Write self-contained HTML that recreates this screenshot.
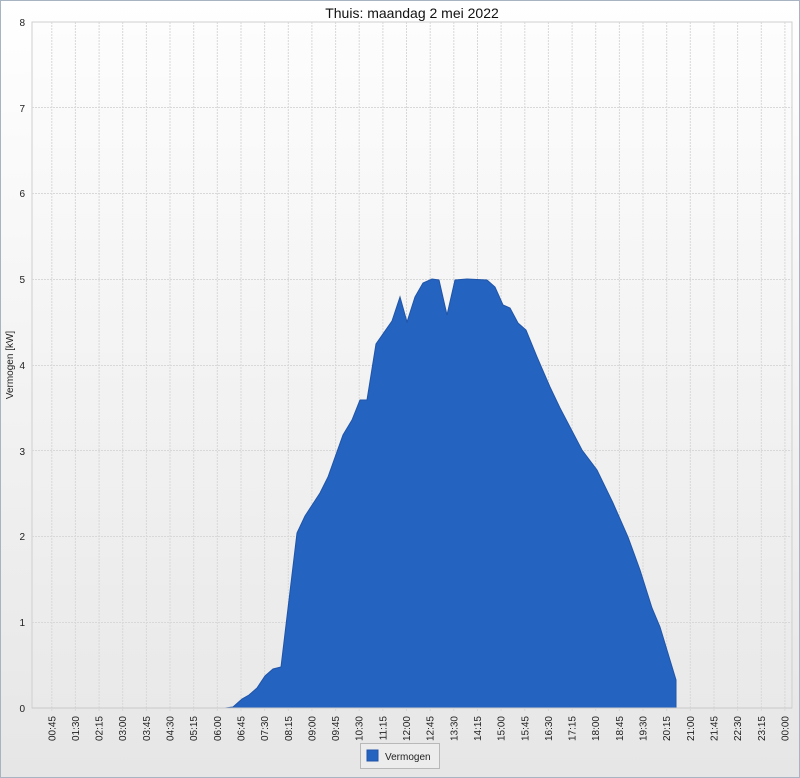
<!DOCTYPE html>
<html><head><meta charset="utf-8"><style>
html,body{margin:0;padding:0;background:#e9e9e9;}
svg{display:block;font-family:"Liberation Sans",sans-serif;}
</style></head><body>
<svg width="800" height="778" viewBox="0 0 800 778" xmlns="http://www.w3.org/2000/svg">
<defs>
<linearGradient id="bg" x1="0" y1="0" x2="0" y2="1"><stop offset="0" stop-color="#ffffff"/><stop offset="1" stop-color="#e6e6e6"/></linearGradient>
<linearGradient id="pl" x1="0" y1="0" x2="0" y2="1"><stop offset="0" stop-color="#fdfdfd"/><stop offset="1" stop-color="#e9e9e9"/></linearGradient>
</defs>
<rect x="0" y="0" width="800" height="778" fill="url(#bg)"/>
<rect x="0.5" y="0.5" width="799" height="777" fill="none" stroke="#a9b4c2"/>
<text x="412" y="18" font-size="14" text-anchor="middle" fill="#111">Thuis: maandag 2 mei 2022</text>
<rect x="32" y="22" width="760" height="686" fill="url(#pl)" stroke="#cfcfcf"/>
<g stroke="#d8d8d8" stroke-dasharray="2,1" stroke-width="1">
<line x1="32" x2="792" y1="622.5" y2="622.5"/><line x1="32" x2="792" y1="536.5" y2="536.5"/><line x1="32" x2="792" y1="450.5" y2="450.5"/><line x1="32" x2="792" y1="365.5" y2="365.5"/><line x1="32" x2="792" y1="279.5" y2="279.5"/><line x1="32" x2="792" y1="193.5" y2="193.5"/><line x1="32" x2="792" y1="107.5" y2="107.5"/>
<line y1="22" y2="712" x1="51.8" x2="51.8"/><line y1="22" y2="712" x1="75.4" x2="75.4"/><line y1="22" y2="712" x1="99.1" x2="99.1"/><line y1="22" y2="712" x1="122.7" x2="122.7"/><line y1="22" y2="712" x1="146.4" x2="146.4"/><line y1="22" y2="712" x1="170" x2="170"/><line y1="22" y2="712" x1="193.7" x2="193.7"/><line y1="22" y2="712" x1="217.3" x2="217.3"/><line y1="22" y2="712" x1="241" x2="241"/><line y1="22" y2="712" x1="264.6" x2="264.6"/><line y1="22" y2="712" x1="288.3" x2="288.3"/><line y1="22" y2="712" x1="311.9" x2="311.9"/><line y1="22" y2="712" x1="335.6" x2="335.6"/><line y1="22" y2="712" x1="359.2" x2="359.2"/><line y1="22" y2="712" x1="382.9" x2="382.9"/><line y1="22" y2="712" x1="406.5" x2="406.5"/><line y1="22" y2="712" x1="430.2" x2="430.2"/><line y1="22" y2="712" x1="453.8" x2="453.8"/><line y1="22" y2="712" x1="477.5" x2="477.5"/><line y1="22" y2="712" x1="501.1" x2="501.1"/><line y1="22" y2="712" x1="524.8" x2="524.8"/><line y1="22" y2="712" x1="548.4" x2="548.4"/><line y1="22" y2="712" x1="572.1" x2="572.1"/><line y1="22" y2="712" x1="595.7" x2="595.7"/><line y1="22" y2="712" x1="619.4" x2="619.4"/><line y1="22" y2="712" x1="643" x2="643"/><line y1="22" y2="712" x1="666.7" x2="666.7"/><line y1="22" y2="712" x1="690.3" x2="690.3"/><line y1="22" y2="712" x1="714" x2="714"/><line y1="22" y2="712" x1="737.6" x2="737.6"/><line y1="22" y2="712" x1="761.3" x2="761.3"/><line y1="22" y2="712" x1="784.9" x2="784.9"/>
</g>
<polygon fill="#2563c0" stroke="#1f55a8" stroke-width="1" points="225,708 233,707 242,699 249,695 257,688 265,676 273,669 281,667 297,533 305,516 320,493 328,477 343,435 352,420 360,400 367,400 376,344 392,321 400,297 407,322 415,297 423,283 432,279 439,280 447,315 455,280 467,279 487,280 495,287 503,305 510,308 518,323 526,330 537,357 550,387 560,408 582,450 597,470 613,503 628,537 640,570 652,608 660,627 676,680 676,708"/>
<line x1="32" x2="792" y1="708" y2="708" stroke="#c9c9c9"/>
<g font-size="10" fill="#222" text-anchor="end">
<text x="25" y="712">0</text><text x="25" y="626">1</text><text x="25" y="540">2</text><text x="25" y="455">3</text><text x="25" y="369">4</text><text x="25" y="283">5</text><text x="25" y="197">6</text><text x="25" y="112">7</text><text x="25" y="26">8</text>
</g>
<text transform="translate(13,365) rotate(-90)" font-size="10" text-anchor="middle" fill="#222">Vermogen [kW]</text>
<g font-size="10" fill="#222" text-anchor="end">
<text transform="translate(55.3,716) rotate(-90)">00:45</text><text transform="translate(78.9,716) rotate(-90)">01:30</text><text transform="translate(102.6,716) rotate(-90)">02:15</text><text transform="translate(126.2,716) rotate(-90)">03:00</text><text transform="translate(149.9,716) rotate(-90)">03:45</text><text transform="translate(173.5,716) rotate(-90)">04:30</text><text transform="translate(197.2,716) rotate(-90)">05:15</text><text transform="translate(220.8,716) rotate(-90)">06:00</text><text transform="translate(244.5,716) rotate(-90)">06:45</text><text transform="translate(268.1,716) rotate(-90)">07:30</text><text transform="translate(291.8,716) rotate(-90)">08:15</text><text transform="translate(315.4,716) rotate(-90)">09:00</text><text transform="translate(339.1,716) rotate(-90)">09:45</text><text transform="translate(362.7,716) rotate(-90)">10:30</text><text transform="translate(386.4,716) rotate(-90)">11:15</text><text transform="translate(410,716) rotate(-90)">12:00</text><text transform="translate(433.7,716) rotate(-90)">12:45</text><text transform="translate(457.3,716) rotate(-90)">13:30</text><text transform="translate(481,716) rotate(-90)">14:15</text><text transform="translate(504.6,716) rotate(-90)">15:00</text><text transform="translate(528.3,716) rotate(-90)">15:45</text><text transform="translate(551.9,716) rotate(-90)">16:30</text><text transform="translate(575.6,716) rotate(-90)">17:15</text><text transform="translate(599.2,716) rotate(-90)">18:00</text><text transform="translate(622.9,716) rotate(-90)">18:45</text><text transform="translate(646.5,716) rotate(-90)">19:30</text><text transform="translate(670.2,716) rotate(-90)">20:15</text><text transform="translate(693.8,716) rotate(-90)">21:00</text><text transform="translate(717.5,716) rotate(-90)">21:45</text><text transform="translate(741.1,716) rotate(-90)">22:30</text><text transform="translate(764.8,716) rotate(-90)">23:15</text><text transform="translate(788.4,716) rotate(-90)">00:00</text>
</g>
<rect x="360.5" y="743.5" width="79" height="25" fill="#ececec" stroke="#b8b8b8"/>
<rect x="367" y="750" width="11" height="11" fill="#2563c0" stroke="#1f55a8"/>
<text x="385" y="760" font-size="10" fill="#222">Vermogen</text>
</svg>
</body></html>
